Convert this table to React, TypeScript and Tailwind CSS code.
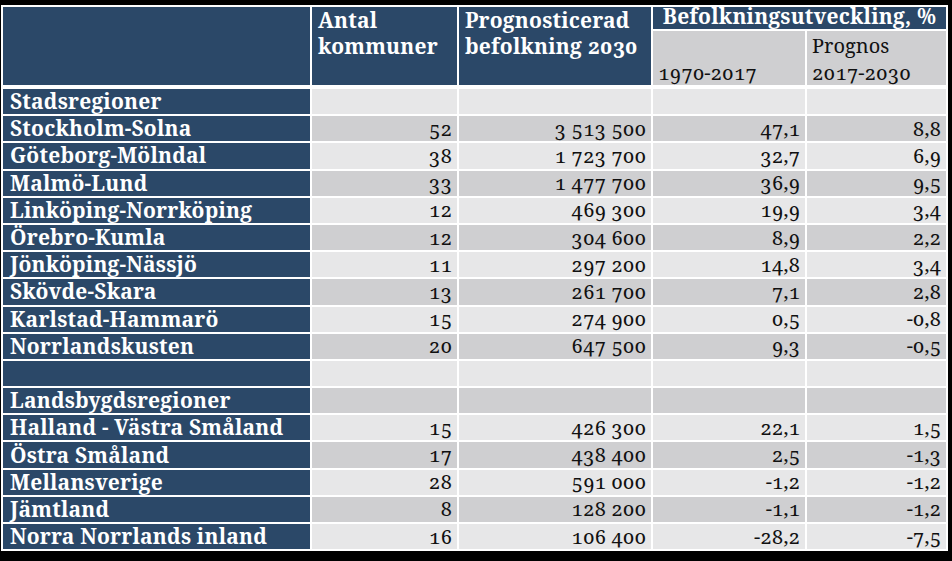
const cols = 'grid grid-cols-[307px_145px_192px_152px_139px] gap-x-[2px]'

type Row = { name: string; n?: string; pop?: string; a?: string; b?: string }

const rows: Row[] = [
  { name: 'Stadsregioner' },
  { name: 'Stockholm-Solna', n: '52', pop: '3 513 500', a: '47,1', b: '8,8' },
  { name: 'Göteborg-Mölndal', n: '38', pop: '1 723 700', a: '32,7', b: '6,9' },
  { name: 'Malmö-Lund', n: '33', pop: '1 477 700', a: '36,9', b: '9,5' },
  { name: 'Linköping-Norrköping', n: '12', pop: '469 300', a: '19,9', b: '3,4' },
  { name: 'Örebro-Kumla', n: '12', pop: '304 600', a: '8,9', b: '2,2' },
  { name: 'Jönköping-Nässjö', n: '11', pop: '297 200', a: '14,8', b: '3,4' },
  { name: 'Skövde-Skara', n: '13', pop: '261 700', a: '7,1', b: '2,8' },
  { name: 'Karlstad-Hammarö', n: '15', pop: '274 900', a: '0,5', b: '-0,8' },
  { name: 'Norrlandskusten', n: '20', pop: '647 500', a: '9,3', b: '-0,5' },
  { name: '' },
  { name: 'Landsbygdsregioner' },
  { name: 'Halland - Västra Småland', n: '15', pop: '426 300', a: '22,1', b: '1,5' },
  { name: 'Östra Småland', n: '17', pop: '438 400', a: '2,5', b: '-1,3' },
  { name: 'Mellansverige', n: '28', pop: '591 000', a: '-1,2', b: '-1,2' },
  { name: 'Jämtland', n: '8', pop: '128 200', a: '-1,1', b: '-1,2' },
  { name: 'Norra Norrlands inland', n: '16', pop: '106 400', a: '-28,2', b: '-7,5' },
]

export default function App() {
  return (
    <div className="w-[952px] h-[561px] bg-black pt-[5px] pl-[1px] font-['Noto_Serif','DejaVu_Serif',Georgia,serif] oldstyle-nums">
      <div className="w-[947px] bg-white p-[2px]">
        {/* header */}
        <div className={`${cols} grid-rows-[22px_54px] gap-y-[2px] text-white`}>
          <div className="row-span-2 bg-[#2b4868]" />
          <div className="row-span-2 bg-[#2b4868] px-[6px] text-[21px] font-bold leading-[26px] tracking-[0.2px]">
            Antal<br />kommuner
          </div>
          <div className="row-span-2 bg-[#2b4868] px-[6px] text-[21px] font-bold leading-[26px] tracking-[0.2px]">
            Prognosticerad<br />befolkning 2030
          </div>
          <div className="col-span-2 bg-[#2b4868] text-center text-[21px] font-bold leading-[18px] tracking-[0.2px] whitespace-nowrap">
            Befolkningsutveckling, %
          </div>
          <div className="bg-[#cfcfd1] px-[5px] pt-[1px] text-[20px] text-[#111] leading-[27px]">
            &nbsp;<br />1970-2017
          </div>
          <div className="bg-[#cfcfd1] px-[5px] pt-[1px] text-[20px] text-[#111] leading-[27px]">
            Prognos<br />2017-2030
          </div>
        </div>

        {/* body */}
        <div className={`${cols} mt-[4px] auto-rows-[25.2px] gap-y-[2px] text-[20px] leading-none`}>
          {rows.map((r, i) => {
            const bg = i % 2 === 0 ? 'bg-[#e7e7e8]' : 'bg-[#cfcfd1]'
            const cell = `${bg} px-[5px] flex items-center justify-end text-[#111] whitespace-nowrap`
            return [
              <div key={`${i}-name`} className="bg-[#2b4868] px-[7px] flex items-center text-white text-[21px] font-bold tracking-[0.2px] whitespace-nowrap">
                {r.name}
              </div>,
              <div key={`${i}-n`} className={cell}>{r.n}</div>,
              <div key={`${i}-pop`} className={cell}>{r.pop}</div>,
              <div key={`${i}-a`} className={cell}>{r.a}</div>,
              <div key={`${i}-b`} className={cell}>{r.b}</div>,
            ]
          })}
        </div>
      </div>
    </div>
  )
}
